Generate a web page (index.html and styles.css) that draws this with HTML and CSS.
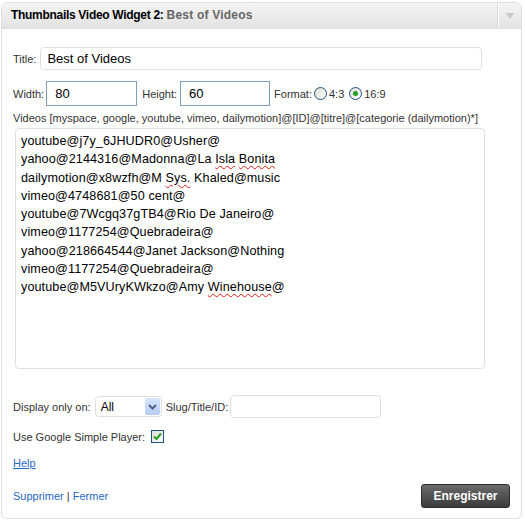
FILE: index.html
```html
<!DOCTYPE html>
<html>
<head>
<meta charset="utf-8">
<link rel="stylesheet" href="styles.css">
</head>
<body>
<div class="widget">
  <div class="widget-top">
    <div class="widget-title"><span class="wt-main">Thumbnails Video Widget 2:</span> <span class="wt-sub">Best of Videos</span></div>
    <div class="widget-action"><span class="tri"></span></div>
  </div>
  <div class="widget-inside">
    <div class="row row-title">
      <label class="lbl">Title:</label>
      <div class="field field-title">Best of Videos</div>
    </div>
    <div class="row row-size">
      <label class="lbl">Width:</label>
      <div class="field field-blue fw">80</div>
      <label class="lbl lbl-h">Height:</label>
      <div class="field field-blue fh">60</div>
      <label class="lbl lbl-f">Format:</label>
      <span class="radio"></span><span class="lbl rtxt">4:3</span>
      <span class="radio checked"><span class="dot"></span></span><span class="lbl rtxt">16:9</span>
    </div>
    <div class="lbl videos-lbl">Videos [myspace, google, youtube, vimeo, dailymotion]@[ID]@[titre]@[categorie (dailymotion)*]</div>
    <div class="textarea">
      <div>youtube@j7y_6JHUDR0@Usher@</div>
      <div>yahoo@2144316@Madonna@La <span class="sp">Isla</span> <span class="sp">Bonita</span></div>
      <div>dailymotion@x8wzfh@M <span class="sp">Sys.</span> Khaled@music</div>
      <div>vimeo@4748681@50 cent@</div>
      <div>youtube@7Wcgq37gTB4@Rio De Janeiro@</div>
      <div>vimeo@1177254@Quebradeira@</div>
      <div>yahoo@218664544@Janet Jackson@Nothing</div>
      <div>vimeo@1177254@Quebradeira@</div>
      <div>youtube@M5VUryKWkzo@Amy <span class="sp">Winehouse</span>@</div>
    </div>
    <div class="row row-display">
      <label class="lbl">Display only on:</label>
      <div class="select"><span class="sel-val">All</span><span class="sel-btn"><svg width="9" height="6" viewBox="0 0 9 6"><path d="M1 1 L4.5 4.5 L8 1" fill="none" stroke="#4d6185" stroke-width="2"/></svg></span></div>
      <label class="lbl lbl-slug">Slug/Title/ID:</label>
      <div class="field field-slug"></div>
    </div>
    <div class="row row-check">
      <label class="lbl">Use Google Simple Player:</label>
      <span class="checkbox"><svg width="9" height="9" viewBox="0 0 9 9"><path d="M1 4.5 L3.5 7 L8 1.5" fill="none" stroke="#21a121" stroke-width="2"/></svg></span>
    </div>
    <div class="help"><a href="#" class="link u">Help</a></div>
    <div class="footer">
      <div class="ctrl"><a href="#" class="link">Supprimer</a> | <a href="#" class="link">Fermer</a></div>
      <button class="btn">Enregistrer</button>
    </div>
  </div>
</div>
</body>
</html>
```
FILE: styles.css
```css
html, body {
  margin: 0;
  padding: 0;
  background: #fff;
}
body {
  font-family: "Liberation Sans", Arial, sans-serif;
  color: #333;
  padding: 2px 0 0 1px;
}
.widget {
  width: 519px;
  height: 515px;
  border: 1px solid #dfdfdf;
  border-radius: 6px;
  background: #fff;
  overflow: hidden;
  display: flex;
  flex-direction: column;
}
.widget-top {
  height: 25px;
  display: flex;
  background: linear-gradient(#f5f5f5, #e2e2e2);
  border-bottom: 1px solid #dfdfdf;
  flex: none;
}
.widget-title {
  flex: 1;
  padding-left: 9px;
  font-size: 12px;
  font-weight: bold;
  line-height: 25px;
  letter-spacing: -0.3px;
}
.wt-main { color: #000; }
.wt-sub { color: #666; letter-spacing: 0.2px; }
.widget-action {
  width: 22px;
  border-left: 1px solid #fff;
  box-shadow: -1px 0 0 #d8d8d8;
  display: flex;
  align-items: center;
  justify-content: center;
}
.tri {
  width: 0;
  height: 0;
  border-left: 4px solid transparent;
  border-right: 4px solid transparent;
  border-top: 6px solid #c8c8c8;
}
.widget-inside {
  padding: 18px 0 0 11px;
  position: relative;
  flex: 1;
}
.row {
  display: flex;
  align-items: center;
}
.lbl {
  font-size: 11px;
  color: #333;
}
.field {
  box-sizing: border-box;
  border: 1px solid #dfdfdf;
  border-radius: 4px;
  background: #fff;
  font-size: 13px;
  color: #000;
  padding-left: 6px;
  display: flex;
  align-items: center;
}
.field-title {
  margin-left: 4px;
  width: 442px;
  height: 23px;
}
.row-size {
  margin-top: 11px;
}
.field-blue {
  border: 1px solid #7e9db9;
  border-radius: 0;
  height: 25px;
  padding-left: 8px;
}
.fw { width: 91px; margin-left: 2px; }
.lbl-h { margin-left: 5px; }
.fh { width: 90px; margin-left: 3px; }
.lbl-f { margin-left: 4px; margin-right: 2px; }
.radio {
  box-sizing: border-box;
  width: 13px;
  height: 13px;
  border-radius: 50%;
  border: 1px solid #1c5180;
  background: linear-gradient(135deg, #dcdcd7, #fff);
  display: inline-flex;
  align-items: center;
  justify-content: center;
}
.dot {
  width: 5px;
  height: 5px;
  border-radius: 50%;
  background: #21a121;
}
.rtxt {
  margin-left: 2px;
  margin-right: 5px;
  font-size: 11px;
}
.videos-lbl {
  margin-top: 5px;
  line-height: 14px;
}
.textarea {
  box-sizing: border-box;
  margin-top: 3px;
  margin-left: 2px;
  width: 470px;
  height: 241px;
  border: 1px solid #dfdfdf;
  border-radius: 4px;
  padding: 3px 0 0 5px;
  font-size: 12.6px;
  letter-spacing: 0.1px;
  line-height: 18.25px;
  color: #000;
}
.sp {
  text-decoration: underline wavy #e21b1b;
  text-decoration-thickness: 1px;
  text-underline-offset: 2px;
}
.row-display {
  margin-top: 26px;
}
.select {
  box-sizing: border-box;
  margin-left: 4px;
  width: 67px;
  height: 21px;
  border: 1px solid #dfdfdf;
  border-radius: 4px;
  display: flex;
  align-items: center;
  justify-content: space-between;
  padding: 0 1px 0 5px;
  font-size: 12px;
  color: #000;
}
.sel-btn {
  width: 15px;
  height: 17px;
  background: linear-gradient(#d6e3fb, #b8cdf5);
  border-radius: 2px;
  display: flex;
  align-items: center;
  justify-content: center;
}
.lbl-slug { margin-left: 4px; margin-right: 2px; }
.field-slug {
  width: 151px;
  height: 23px;
}
.row-check {
  margin-top: 12px;
}
.checkbox {
  box-sizing: border-box;
  margin-left: 6px;
  width: 13px;
  height: 13px;
  border: 1px solid #1c5180;
  background: linear-gradient(135deg, #dcdcd7, #fff);
  display: inline-flex;
  align-items: center;
  justify-content: center;
}
.help {
  margin-top: 14px;
  font-size: 11px;
}
.link {
  color: #1f68c8;
  text-decoration: none;
}
.link.u { text-decoration: underline; }
.footer {
  margin-top: 15px;
  display: flex;
  justify-content: space-between;
  align-items: center;
  padding-right: 11px;
}
.ctrl {
  font-size: 11px;
  color: #333;
}
.btn {
  box-sizing: border-box;
  width: 89px;
  height: 24px;
  border: 1px solid #2e2e2e;
  border-radius: 3px;
  background: linear-gradient(#6a6a6a, #3a3a3a);
  color: #fff;
  font-family: "Liberation Sans", Arial, sans-serif;
  font-weight: bold;
  font-size: 12px;
  padding: 0;
}
```
